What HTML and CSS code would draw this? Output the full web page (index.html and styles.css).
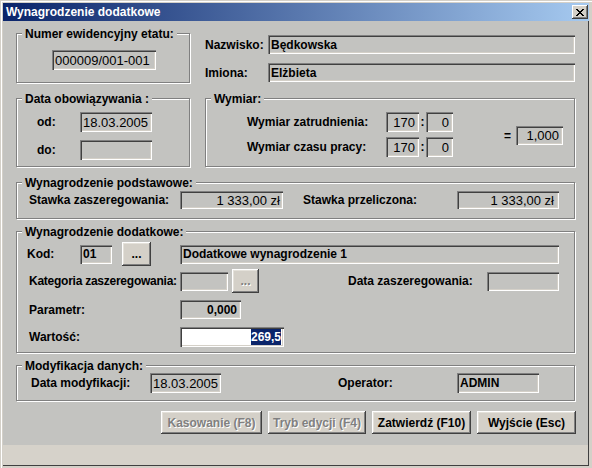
FILE: index.html
```html
<!DOCTYPE html>
<html lang="pl">
<head>
<meta charset="utf-8">
<title>Wynagrodzenie dodatkowe</title>
<link rel="stylesheet" href="styles.css">
</head>
<body>
<div class="window">
  <div class="titlebar">
    <span class="title">Wynagrodzenie dodatkowe</span>
    <button class="close" type="button" aria-label="Zamknij">
      <svg width="8" height="7" viewBox="0 0 8 7" shape-rendering="crispEdges">
        <path fill="#000" d="M0 0h2v1h-2zM6 0h2v1h-2zM1 1h2v1h-2zM5 1h2v1h-2zM2 2h4v1h-4zM3 3h2v1h-2zM2 4h4v1h-4zM1 5h2v1h-2zM5 5h2v1h-2zM0 6h2v1h-2zM6 6h2v1h-2z"/>
      </svg>
    </button>
  </div>
  <div class="inner">
    <div class="client">
      <div class="row row-1">
        <div class="group g-numer">
          <div class="legend">Numer ewidencyjny etatu:</div>
          <div class="body numer-body">
            <div class="field f-numer">000009/001-001</div>
          </div>
        </div>
        <div class="person">
          <div class="line">
            <span class="label l-person">Nazwisko:</span>
            <div class="field f-person b">Będkowska</div>
          </div>
          <div class="line line-2">
            <span class="label l-person">Imiona:</span>
            <div class="field f-person b">Elżbieta</div>
          </div>
        </div>
      </div>

      <div class="row row-2">
        <div class="group g-data">
          <div class="legend">Data obowiązywania :</div>
          <div class="body data-body">
            <div class="drow">
              <span class="label l-data">od:</span>
              <div class="field f-date">18.03.2005</div>
            </div>
            <div class="drow drow-2">
              <span class="label l-data">do:</span>
              <div class="field f-date"></div>
            </div>
          </div>
        </div>
        <div class="group g-wymiar">
          <div class="legend">Wymiar:</div>
          <div class="body wymiar-body">
            <div class="wrows">
              <div class="wrow">
                <span class="label l-wymiar">Wymiar zatrudnienia:</span>
                <div class="field f-170 right">170</div>
                <span class="colon">:</span>
                <div class="field f-0 right">0</div>
              </div>
              <div class="wrow wrow-2">
                <span class="label l-wymiar">Wymiar czasu pracy:</span>
                <div class="field f-170 right">170</div>
                <span class="colon">:</span>
                <div class="field f-0 right">0</div>
              </div>
            </div>
            <div class="eq">
              <span class="eq-sign">=</span>
              <div class="field f-ratio right">1,000</div>
            </div>
          </div>
        </div>
      </div>

      <div class="row row-3">
        <div class="group g-wide g-podst">
          <div class="legend">Wynagrodzenie podstawowe:</div>
          <div class="body podst-body">
            <span class="label l-wide">Stawka zaszeregowania:</span>
            <div class="field f-kwota1 right">1 333,00 zł</div>
            <span class="label l-przel">Stawka przeliczona:</span>
            <div class="field f-kwota2 right">1 333,00 zł</div>
          </div>
        </div>
      </div>

      <div class="row row-4">
        <div class="group g-wide g-dodat">
          <div class="legend">Wynagrodzenie dodatkowe:</div>
          <div class="body dodat-body">
            <div class="krow">
              <span class="label l-kod">Kod:</span>
              <div class="field f-kod b">01</div>
              <button class="btn btn-dots" type="button">...</button>
              <div class="field f-nazwa b">Dodatkowe wynagrodzenie 1</div>
            </div>
            <div class="krow krow-2">
              <span class="label l-wide l-tight">Kategoria zaszeregowania:</span>
              <div class="field f-kat"></div>
              <button class="btn btn-dots2" type="button" disabled>...</button>
              <span class="label l-dzasz">Data zaszeregowania:</span>
              <div class="field f-dzasz"></div>
            </div>
            <div class="prow">
              <span class="label l-wide">Parametr:</span>
              <div class="field f-param right b">0,000</div>
            </div>
            <div class="prow prow-2">
              <span class="label l-wide">Wartość:</span>
              <div class="field f-wartosc right b"><span class="sel">269,5</span></div>
            </div>
          </div>
        </div>
      </div>

      <div class="row row-5">
        <div class="group g-wide g-mod">
          <div class="legend">Modyfikacja danych:</div>
          <div class="body mod-body">
            <span class="label l-mod">Data modyfikacji:</span>
            <div class="field f-dmod">18.03.2005</div>
            <span class="label l-oper">Operator:</span>
            <div class="field f-oper b">ADMIN</div>
          </div>
        </div>
      </div>

      <div class="buttons">
        <button class="btn btn-kas" type="button" disabled>Kasowanie (F8)</button>
        <button class="btn btn-tryb" type="button" disabled>Tryb edycji (F4)</button>
        <button class="btn btn-zatw" type="button">Zatwierdź (F10)</button>
        <button class="btn btn-wyj" type="button">Wyjście (Esc)</button>
      </div>
    </div>
    <div class="band"></div>
  </div>
</div>
</body>
</html>
```

FILE: styles.css
```css
:root {
  --form: #c3c3c0;
  --face: #d4d0c8;
}

* { box-sizing: border-box; }

html, body {
  margin: 0;
  padding: 0;
  background: var(--face);
}

body {
  font-family: "Liberation Sans", Arial, sans-serif;
  font-size: 12px;
  color: #000;
}

.window {
  width: 592px;
  height: 468px;
  padding: 3px 3px 2px 3px;
  display: flex;
  flex-direction: column;
  background: var(--face);
  box-shadow: inset 1px 1px 0 var(--face), inset 2px 2px 0 #fff;
}

/* title bar */
.titlebar {
  height: 18px;
  flex: none;
  display: flex;
  align-items: center;
  padding-left: 3px;
  background: linear-gradient(to right, #0a246a, #a6caf0);
}

.title {
  flex: 1;
  color: #fff;
  font-weight: bold;
  line-height: 18px;
  white-space: nowrap;
}

.close {
  width: 16px;
  height: 14px;
  margin-right: 1px;
  padding: 0;
  border: none;
  display: flex;
  align-items: center;
  justify-content: center;
  background: var(--face);
  box-shadow: inset -1px -1px 0 #404040, inset 1px 1px 0 #fff, inset -2px -2px 0 #808080;
}

.close svg { display: block; }

/* inner area */
.inner {
  flex: 1;
  display: flex;
  flex-direction: column;
  border-right: 1px solid #404040;
  border-bottom: 1px solid #404040;
}

.client {
  flex: 1;
  background: var(--form);
  padding: 12px 0 0 13px;
  display: flex;
  flex-direction: column;
}

.band {
  height: 20px;
  flex: none;
  background: #d6d2ca;
}

/* common */
.row { display: flex; flex: none; }
.row-1 { height: 50px; margin-bottom: 15px; }
.row-2 { height: 69px; margin-bottom: 15px; }
.row-3 { height: 37px; margin-bottom: 12px; }
.row-4 { height: 122px; margin-bottom: 12px; }
.row-5 { height: 36px; margin-bottom: 10px; }

.group {
  border: 1px solid #808080;
  box-shadow: inset 1px 1px 0 #fff, 1px 1px 0 #fff;
}

.legend {
  width: max-content;
  margin: -7px 0 -7px 5px;
  padding: 0 3px;
  line-height: 14px;
  font-weight: bold;
  white-space: nowrap;
  background: var(--form);
  position: relative;
}

.label {
  font-weight: bold;
  white-space: nowrap;
  flex: none;
}

.field {
  flex: none;
  display: flex;
  align-items: center;
  padding: 0 4px 0 3px;
  font-size: 13px;
  white-space: nowrap;
  overflow: hidden;
  background: var(--form);
  box-shadow: inset 1px 1px 0 #808080, inset 2px 2px 0 #404040,
              inset -1px -1px 0 #fff, inset -2px -2px 0 var(--face);
}

.field.right { justify-content: flex-end; }
.b { font-weight: bold; font-size: 12px; }

/* group 1 */
.g-numer { width: 174px; height: 50px; }
.numer-body { padding: 16px 0 0 35px; }
.f-numer { width: 104px; height: 20px; padding-left: 3px; }

.person {
  margin-left: 15px;
  padding-top: 2px;
  display: flex;
  flex-direction: column;
}
.line { display: flex; align-items: center; height: 19px; }
.line-2 { margin-top: 9px; }
.l-person { width: 63px; }
.f-person { width: 307px; height: 19px; }

/* group data */
.g-data { width: 174px; height: 69px; }
.data-body { padding: 13px 0 0 20px; }
.drow { display: flex; align-items: center; height: 20px; }
.drow-2 { margin-top: 8px; }
.l-data { width: 43px; }
.f-date { width: 72px; height: 20px; padding-left: 3px; }

/* group wymiar */
.g-wymiar { width: 370px; height: 69px; margin-left: 15px; }
.wymiar-body { display: flex; padding-top: 13px; }
.wrows { padding-left: 41px; }
.wrow { display: flex; align-items: center; height: 20px; }
.wrow-2 { margin-top: 5px; }
.l-wymiar { width: 139px; }
.f-170 { width: 33px; height: 20px; }
.f-0 { width: 27px; height: 20px; }
.colon { width: 7px; text-align: center; font-weight: bold; }
.eq {
  display: flex;
  align-items: center;
  height: 19px;
  margin: 14px 0 0 51px;
}
.eq-sign { width: 12px; font-weight: bold; }
.f-ratio { width: 47px; height: 19px; }

/* wide groups */
.g-wide { width: 559px; }
.g-podst { height: 37px; }
.podst-body {
  display: flex;
  align-items: center;
  height: 18px;
  margin-top: 8px;
  padding-left: 12px;
}
.l-wide { width: 151px; }
.f-kwota1 { width: 103px; height: 18px; padding-right: 3px; }
.l-przel { width: 154px; margin-left: 20px; }
.f-kwota2 { width: 102px; height: 18px; padding-right: 5px; }

.g-dodat { height: 122px; }
.dodat-body { padding: 10px 0 0 12px; }
.krow { display: flex; align-items: center; height: 24px; }
.krow-2 { margin-top: 3px; }
.l-kod { width: 53px; margin-left: -2px; }
.f-kod { width: 32px; height: 19px; }
.f-nazwa { width: 379px; height: 19px; margin-left: 29px; }
.l-tight { letter-spacing: -0.25px; }
.f-kat { width: 48px; height: 19px; }
.l-dzasz { width: 139px; margin-left: 89px; }
.f-dzasz { width: 72px; height: 19px; }
.prow { display: flex; align-items: center; height: 19px; margin-top: 7px; }
.prow-2 { height: 20px; margin-top: 8px; }
.f-param { width: 61px; height: 19px; }
.f-wartosc {
  width: 104px;
  height: 20px;
  background: #fff;
  padding-right: 3px;
}
.sel {
  background: #0a246a;
  color: #fff;
  line-height: 16px;
}

.g-mod { height: 36px; }
.mod-body {
  display: flex;
  align-items: center;
  height: 20px;
  margin-top: 7px;
  padding-left: 14px;
}
.l-mod { width: 119px; }
.f-dmod { width: 71px; height: 20px; padding-left: 3px; }
.l-oper { width: 119px; margin-left: 117px; }
.f-oper { width: 82px; height: 20px; }

/* buttons */
.btn {
  flex: none;
  padding: 0;
  border: none;
  font-family: inherit;
  font-size: 12px;
  font-weight: bold;
  color: #000;
  background: var(--face);
  box-shadow: inset -1px -1px 0 #404040, inset 1px 1px 0 #fff,
              inset -2px -2px 0 #808080, inset 2px 2px 0 #e4e1da;
}
.btn:disabled {
  color: #808080;
  text-shadow: 1px 1px 0 #fff;
}
.btn-dots { width: 29px; height: 24px; margin-left: 10px; line-height: 18px; }
.btn-dots2 { width: 27px; height: 24px; margin-left: 4px; line-height: 18px; }

.buttons {
  display: flex;
  gap: 6px;
  padding-left: 145px;
  height: 23px;
}
.buttons .btn { height: 23px; }
.btn-kas { width: 101px; }
.btn-tryb { width: 98px; }
.btn-zatw { width: 99px; }
.btn-wyj { width: 99px; }
```
